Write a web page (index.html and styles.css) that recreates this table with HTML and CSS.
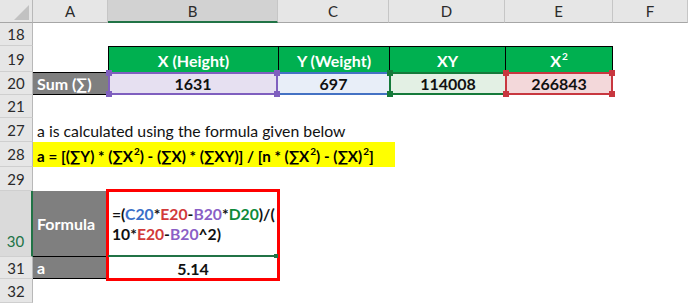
FILE: index.html
```html
<!DOCTYPE html>
<html>
<head>
<meta charset="utf-8">
<link rel="stylesheet" href="styles.css">
</head>
<body>
<div class="sheet">
  <div class="corner"><span class="tri"></span></div>
  <div class="ch">A</div>
  <div class="ch sel">B</div>
  <div class="ch">C</div>
  <div class="ch">D</div>
  <div class="ch">E</div>
  <div class="ch">F</div>

  <div class="rh">18</div>
  <div class="row-rest"></div>

  <div class="rh">19</div>
  <div class="cell"></div>
  <div class="hd">X (Height)</div>
  <div class="hd">Y (Weight)</div>
  <div class="hd">XY</div>
  <div class="hd last"><span>X<sup class="sup">2</sup></span></div>
  <div class="cell"></div>

  <div class="rh">20</div>
  <div class="lbl">Sum (∑)</div>
  <div class="val purple">1631</div>
  <div class="val blue">697</div>
  <div class="val green">114008</div>
  <div class="val red">266843</div>
  <div class="cell"></div>

  <div class="rh">21</div>
  <div class="row-rest"></div>

  <div class="rh">27</div>
  <div class="row-rest text">a is calculated using the formula given below</div>

  <div class="rh">28</div>
  <div class="row-rest"><span class="hl"><span>a = [(∑Y) * (∑X<sup class="sup">2</sup>) - (∑X) * (∑XY)] / [n * (∑X<sup class="sup">2</sup>) - (∑X)<sup class="sup">2</sup>]</span></span></div>

  <div class="rh">29</div>
  <div class="row-rest"></div>

  <div class="rh active">30</div>
  <div class="lbl tall">Formula</div>
  <div class="box">
    <div class="fx">
      <div>=(<span class="c-blue">C20</span>*<span class="c-red">E20</span>-<span class="c-purple">B20</span>*<span class="c-green">D20</span>)/(</div>
      <div>10*<span class="c-red">E20</span>-<span class="c-purple">B20</span>^2)</div>
    </div>
    <div class="res">5.14</div>
  </div>
  <div class="cell rest-after-box"></div>

  <div class="rh">31</div>
  <div class="lbl bottom">a</div>
  <div class="cell rest-after-box"></div>

  <div class="rh">32</div>
  <div class="row-rest"></div>
</div>
</body>
</html>
```

FILE: styles.css
```css
* { box-sizing: border-box; }
html, body { margin: 0; padding: 0; background: #fff; }
body {
  width: 688px;
  height: 303px;
  overflow: hidden;
  font-family: Lato, "Open Sans", "Liberation Sans", sans-serif;
  font-size: 16px;
  color: #000;
}
.sheet {
  display: grid;
  grid-template-columns: 33px 75px 170px 111px 116px 108px 75px;
  grid-template-rows: 23px 23px 26px 23px 23px 24px 25px 24px 66px 22px 24px;
}
.corner {
  background: #e6e6e6;
  border-right: 1px solid #b8b8b8;
  border-bottom: 1px solid #a6a6a6;
  display: flex;
  justify-content: flex-end;
  align-items: flex-end;
  padding: 0 3px 2px 0;
}
.tri {
  width: 15px;
  height: 15px;
  background: #c2c2c2;
  clip-path: polygon(100% 0, 100% 100%, 0 100%);
}
.ch {
  background: #e6e6e6;
  border-right: 1px solid #c6c6c6;
  border-bottom: 1px solid #a6a6a6;
  display: flex;
  align-items: center;
  justify-content: center;
  color: #2b2b2b;
  font-size: 15px;
}
.ch.sel {
  background: #d2d2d2;
  border-bottom: 2px solid #217346;
}
.rh {
  grid-column: 1;
  background: #e6e6e6;
  border-right: 1px solid #b8b8b8;
  border-bottom: 1px solid #cfcfcf;
  display: flex;
  align-items: center;
  justify-content: center;
  color: #2b2b2b;
  font-size: 15px;
}
.rh.active {
  background: #dadada;
  color: #217346;
  border-right: 2px solid #217346;
  align-items: flex-end;
  padding-bottom: 6px;
}
.row-rest { grid-column: 2 / 8; }
.text {
  display: flex;
  align-items: center;
  padding-left: 4px;
  padding-top: 1px;
  color: #111;
  font-size: 15.8px;
}
.hl {
  display: flex;
  align-items: center;
  width: 362px;
  height: 100%;
  background: #ffff00;
  font-weight: bold;
  font-size: 15.2px;
  padding-left: 4px;
  padding-top: 2px;
  white-space: nowrap;
}
.sup {
  font-size: 10px;
  line-height: 0;
  vertical-align: baseline;
  position: relative;
  top: -7px;
  margin-left: 1px;
}
.hd {
  background: #00b050;
  color: #fff;
  font-weight: bold;
  border-top: 1px solid #000;
  border-left: 1px solid #000;
  display: flex;
  align-items: center;
  justify-content: center;
  padding-top: 1px;
}
.hd.last { border-right: 1px solid #000; }
.lbl {
  background: #7f7f7f;
  color: #fff;
  font-weight: bold;
  border-top: 1px solid #000;
  border-bottom: 1px solid #000;
  display: flex;
  align-items: center;
  padding-left: 4px;
}
.lbl.tall { border-top: 0; }
.lbl.bottom { border-top: 0; }
.val {
  --c: #000;
  position: relative;
  border: 2px solid var(--c);
  display: flex;
  align-items: center;
  justify-content: center;
  font-weight: bold;
  color: #111;
}
.val::before, .val::after {
  content: "";
  position: absolute;
  left: -4px;
  right: -4px;
  height: 6px;
  background:
    linear-gradient(var(--c), var(--c)) left top / 6px 6px no-repeat,
    linear-gradient(var(--c), var(--c)) right top / 6px 6px no-repeat;
}
.val::before { top: -4px; }
.val::after { bottom: -4px; }
.val.purple { --c: #7f5fbf; background: #e6e0f1; z-index: 3; }
.val.blue { --c: #4472c4; background: #e8eef8; border-left: 0; border-right: 0; z-index: 1; }
.val.blue::before, .val.blue::after { display: none; }
.val.green { --c: #157a3a; background: #e3f0e4; border-right: 0; z-index: 2; }
.val.red { --c: #c8373f; background: #f3d8da; z-index: 3; }

.box {
  grid-column: 3;
  grid-row: span 2;
  display: grid;
  grid-template-rows: 66px 22px;
  outline: 3px solid #ff0000;
  outline-offset: -1px;
  position: relative;
  z-index: 4;
  background: #fff;
}
.fx {
  position: relative;
  display: flex;
  flex-direction: column;
  justify-content: center;
  padding-left: 4px;
  padding-top: 2px;
  line-height: 20px;
  font-weight: bold;
  font-size: 15.7px;
  color: #111;
  border-bottom: 2px solid #217346;
  white-space: nowrap;
}
.fx::after {
  content: "";
  position: absolute;
  right: 0;
  bottom: -3px;
  width: 4px;
  height: 4px;
  background: #217346;
}
.res {
  display: flex;
  align-items: center;
  justify-content: center;
  font-weight: bold;
  color: #111;
}
.rest-after-box { grid-column: 4 / 8; }
.c-blue { color: #3a6fc8; }
.c-red { color: #d23a3a; }
.c-purple { color: #8a5fc6; }
.c-green { color: #0e8a3a; }
```
